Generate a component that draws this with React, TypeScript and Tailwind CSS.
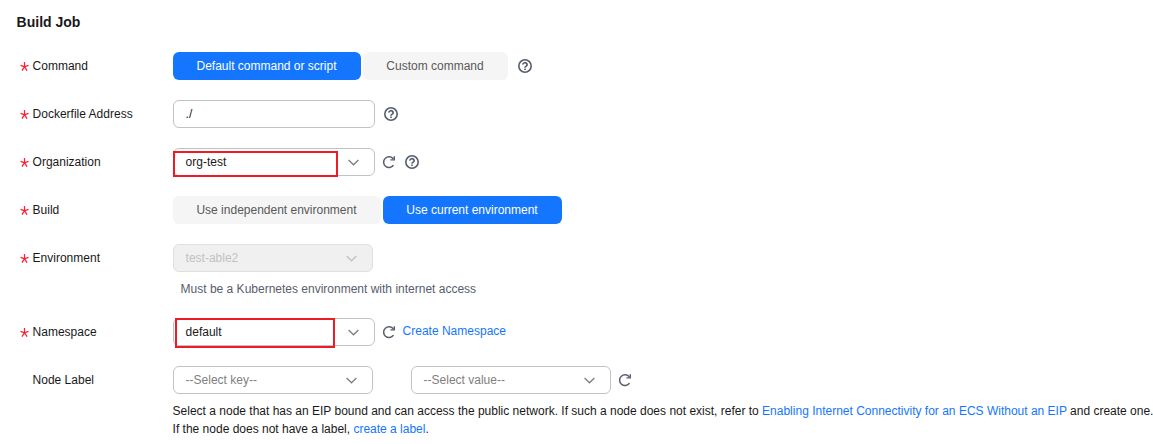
import type { ReactNode } from "react";
import clsx from "clsx";

function Asterisk() {
  return (
    <svg width="9" height="9" viewBox="0 0 9 9" fill="none" stroke="#f5222d" strokeWidth="1.25">
      <path d="M4.5 0V4.8M0.5 3.4L4.5 4.8L8.5 3.4M1.9 8.6L4.5 4.8L7.1 8.6" />
    </svg>
  );
}

function HelpIcon({ className }: { className?: string }) {
  return (
    <svg className={className} width="14" height="14" viewBox="0 0 14 14" fill="none" stroke="#575d6c" strokeWidth="1.6">
      <circle cx="7" cy="7" r="6.2" />
      <path d="M4.9 5.7a2.1 1.9 0 1 1 3.1 1.5C7.3 7.5 7 7.8 7 8.7" />
      <path d="M7 9.5v1.4" />
    </svg>
  );
}

function RefreshIcon({ className }: { className?: string }) {
  return (
    <svg className={className} width="14" height="14" viewBox="0 0 14 14" fill="none" stroke="#575d6c" strokeWidth="1.5">
      <path d="M11.5 10.2A5.4 5.4 0 1 1 11.4 4" />
      <path d="M12.3 1.2v3.7H8.4" strokeWidth="1.4" />
    </svg>
  );
}

function Chevron() {
  return (
    <svg width="11" height="7" viewBox="0 0 11 7" fill="none" stroke="currentColor" strokeWidth="1.4">
      <path d="M0.6 0.9L5.5 5.7L10.4 0.9" />
    </svg>
  );
}

type RowProps = {
  label: string;
  required?: boolean;
  children: ReactNode;
};

function Row({ label, required = true, children }: RowProps) {
  return (
    <div className="flex h-7 items-center">
      <div className="flex w-[173px] shrink-0 items-center pl-5">
        <span className="w-[12.6px]">{required && <Asterisk />}</span>
        <span>{label}</span>
      </div>
      {children}
    </div>
  );
}

type SelectProps = {
  value: string;
  className: string;
  placeholder?: boolean;
  disabled?: boolean;
  children?: ReactNode;
};

function Select({ value, className, placeholder, disabled, children }: SelectProps) {
  return (
    <div
      className={clsx(
        "relative flex h-7 shrink-0 items-center justify-between rounded-md border pl-[11.6px] pr-[15px]",
        disabled ? "border-[#dfdfdf] bg-[#f0f0f0] text-[#c2c2c2]" : "border-[#c2c2c2] bg-white",
        placeholder && "text-[#808080]",
        className
      )}
    >
      <span>{value}</span>
      <span className={disabled ? "text-[#c2c2c2]" : "text-[#808080]"}>
        <Chevron />
      </span>
      {children}
    </div>
  );
}

function Segment({ active, className, children }: { active?: boolean; className: string; children: ReactNode }) {
  return (
    <button
      className={clsx(
        "h-7 shrink-0 rounded-md pr-px text-center",
        active ? "bg-[#1476ff] text-white" : "bg-[#f5f5f5] text-[#595959]",
        className
      )}
    >
      {children}
    </button>
  );
}

export default function App() {
  return (
    <div className="h-[444px] w-[1153px] overflow-hidden bg-white pt-3 font-['Liberation_Sans',Arial,sans-serif] text-xs whitespace-nowrap text-[#191919]">
      <h2 className="mb-5 pl-[16.6px] text-sm leading-5 font-bold">Build Job</h2>

      <div className="flex flex-col gap-5">
        <Row label="Command">
          <div className="flex gap-0.5">
            <Segment active className="w-[188px]">Default command or script</Segment>
            <Segment className="w-[145px]">Custom command</Segment>
          </div>
          <HelpIcon className="ml-2.5" />
        </Row>

        <Row label="Dockerfile Address">
          <div className="flex h-7 w-[202px] items-center rounded-md border border-[#c2c2c2] pl-[11.6px]">./</div>
          <HelpIcon className="ml-[9px]" />
        </Row>

        <Row label="Organization">
          <Select value="org-test" className="w-[202px]">
            <div className="absolute -left-px top-0.5 h-[26px] w-[165px] border-2 border-[#ed1c24]" />
          </Select>
          <RefreshIcon className="ml-[7px]" />
          <HelpIcon className="ml-[9px]" />
        </Row>

        <Row label="Build">
          <div className="flex gap-0.5">
            <Segment className="w-[208px]">Use independent environment</Segment>
            <Segment active className="w-[179px]">Use current environment</Segment>
          </div>
        </Row>

        <div>
          <Row label="Environment">
            <Select value="test-able2" disabled className="w-[200px]" />
          </Row>
          <p className="mt-[7px] pl-[180.6px] leading-5 text-[#575d6c]">
            Must be a Kubernetes environment with internet access
          </p>
        </div>

        <div className="-mt-px">
          <Row label="Namespace">
            <Select value="default" className="w-[202px]">
              <div className="absolute left-px -top-px h-[30px] w-40 border-2 border-[#ed1c24]" />
            </Select>
            <RefreshIcon className="ml-[7px]" />
            <a className="mb-0.5 ml-[6.6px] text-[#1476ff]">Create Namespace</a>
          </Row>
        </div>

        <div>
          <Row label="Node Label" required={false}>
            <Select value="--Select key--" placeholder className="w-[200px]" />
            <Select value="--Select value--" placeholder className="ml-[38px] w-[200px]" />
            <RefreshIcon className="ml-[7px]" />
          </Row>
          <p className="mt-2 pl-[172.6px] leading-[18px]">
            Select a node that has an EIP bound and can access the public network. If such a node does not exist, refer to{" "}
            <a className="text-[#1476ff]">Enabling Internet Connectivity for an ECS Without an EIP</a> and create one.
            <br />
            If the node does not have a label, <a className="text-[#1476ff]">create a label</a>.
          </p>
        </div>
      </div>
    </div>
  );
}
